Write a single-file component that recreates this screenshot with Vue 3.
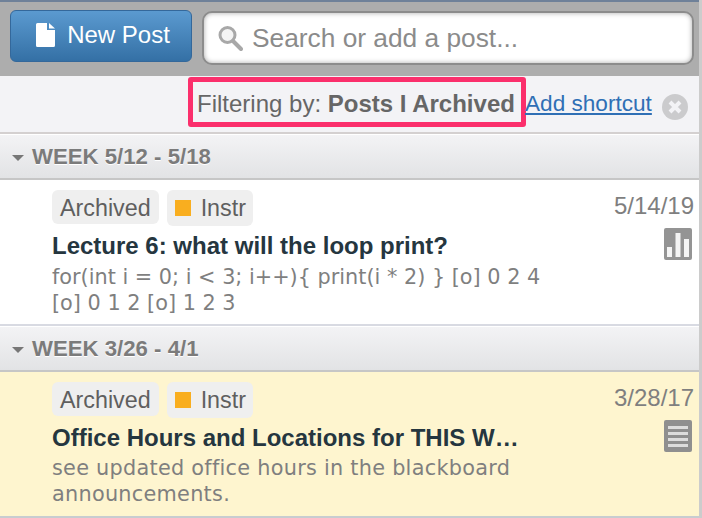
<template>
  <div class="feed">
    <!-- top toolbar -->
    <header class="toolbar">
      <button class="new-post">
        <svg class="doc-icon" width="19" height="24" viewBox="0 0 19 24">
          <path d="M0 1.5 Q0 0 1.5 0 H11 V7 H19 V22.5 Q19 24 17.5 24 H1.5 Q0 24 0 22.5 Z" fill="#fff" />
          <path d="M13 0 L19 5.5 H13 Z" fill="#fff" />
        </svg>
        New Post
      </button>
      <div class="search">
        <svg width="26" height="28" viewBox="0 0 26 28">
          <circle cx="10.5" cy="11" r="7.5" fill="#f4f4f4" stroke="#a8a8a8" stroke-width="3" />
          <path d="M16 17 L24 25" stroke="#a8a8a8" stroke-width="4" stroke-linecap="round" />
        </svg>
        <span>Search or add a post...</span>
      </div>
    </header>

    <!-- filter row -->
    <div class="filter-bar">
      <div class="filter-box">Filtering by: <b>Posts I Archived</b></div>
      <a class="shortcut">Add shortcut</a>
      <svg class="clear" width="26" height="26" viewBox="0 0 26 26">
        <circle cx="13" cy="13" r="13" fill="#cbcbcd" />
        <path d="M8 8 L18 18 M18 8 L8 18" stroke="#f3f3f6" stroke-width="4" />
      </svg>
    </div>

    <template v-for="group in groups" :key="group.week">
      <div class="week"><i class="caret"></i>{{ group.week }}</div>
      <article class="post" :class="{ unread: group.post.highlight }">
        <div class="post-main">
          <div class="tags">
            <span class="tag">Archived</span>
            <span class="tag instr"><i class="square"></i>Instr</span>
          </div>
          <h3>{{ group.post.title }}</h3>
          <p>{{ group.post.body }}</p>
        </div>
        <div class="post-side">
          <div class="date">{{ group.post.date }}</div>
          <svg v-if="group.post.kind === 'poll'" width="28" height="32" viewBox="0 0 28 32">
            <rect width="28" height="32" rx="2" fill="#949494" />
            <rect x="3" y="19" width="5" height="10" fill="#f4f4f4" />
            <rect x="11.5" y="5" width="5" height="24" fill="#f4f4f4" />
            <rect x="20" y="11" width="5" height="18" fill="#f4f4f4" />
          </svg>
          <svg v-else width="28" height="32" viewBox="0 0 28 32">
            <rect width="28" height="32" rx="2" fill="#8f8f8f" />
            <rect x="4" y="6" width="20" height="3" fill="#dcdcdc" />
            <rect x="4" y="12" width="20" height="3" fill="#dcdcdc" />
            <rect x="4" y="18" width="20" height="3" fill="#dcdcdc" />
            <rect x="4" y="24" width="20" height="3" fill="#dcdcdc" />
          </svg>
        </div>
      </article>
    </template>
  </div>
</template>

<script setup>
const groups = [
  {
    week: 'WEEK 5/12 - 5/18',
    post: {
      title: 'Lecture 6: what will the loop print?',
      body: 'for(int i = 0; i < 3; i++){ print(i * 2) } [o] 0 2 4 [o] 0 1 2 [o] 1 2 3',
      date: '5/14/19',
      kind: 'poll',
      highlight: false
    }
  },
  {
    week: 'WEEK 3/26 - 4/1',
    post: {
      title: 'Office Hours and Locations for THIS W…',
      body: 'see updated office hours in the blackboard announcements.',
      date: '3/28/17',
      kind: 'note',
      highlight: true
    }
  }
]
</script>

<style>
body {
  background: #fff;
  overflow: hidden;
}
</style>

<style scoped>
.feed {
  width: 702px;
  height: 518px;
  overflow: hidden;
  box-sizing: border-box;
  border-right: 3px solid #ccc;
  font-family: 'Liberation Sans', Arial, sans-serif;
}

.toolbar {
  height: 76px;
  box-sizing: border-box;
  margin-right: -3px;
  border-top: 2px solid #6f8199;
  background: #adadad;
  padding: 8px 8px 0 10px;
  display: flex;
  align-items: flex-start;
  gap: 10px;
}

.new-post {
  width: 182px;
  height: 52px;
  flex: none;
  display: flex;
  align-items: center;
  justify-content: center;
  gap: 12px;
  padding: 0 0 2px 4px;
  border: 1px solid #34689b;
  border-radius: 6px;
  background: linear-gradient(#5b9ad0, #3470a5);
  color: #fff;
  font: 24px 'Liberation Sans', Arial, sans-serif;
}

.search {
  flex: 1;
  height: 54px;
  margin-top: 1px;
  box-sizing: border-box;
  display: flex;
  align-items: center;
  gap: 9px;
  padding: 0 0 0 13px;
  border: 2px solid #8c8c8c;
  border-radius: 10px;
  background: #fff;
  box-shadow: inset 0 0 5px #aaa;
  color: #8b8b8b;
  font-size: 26.3px;
}

.filter-bar {
  height: 58px;
  box-sizing: border-box;
  background: #f3f3f6;
  border-bottom: 2px solid #d4d0d0;
  display: flex;
  align-items: flex-start;
  padding: 1px 0 0 188px;
  color: #666;
  font-size: 24px;
}

.filter-box {
  width: 338px;
  height: 50px;
  box-sizing: border-box;
  flex: none;
  border: 5px solid #fb2f6c;
  border-radius: 3px;
  padding: 8px 0 0 4px;
  white-space: nowrap;
}

.shortcut {
  margin: 14px 0 0 -1px;
  color: #2f6fb5;
  font-size: 22.6px;
  text-decoration: underline;
  white-space: nowrap;
}

.clear {
  margin: 17px 0 0 10px;
  flex: none;
}

.week {
  height: 45px;
  box-sizing: border-box;
  margin-top: 1px;
  background: linear-gradient(#f3f3f5, #e2e3e5);
  border-bottom: 2px solid #c6c6c6;
  padding: 1px 0 0 12px;
  display: flex;
  align-items: center;
  color: #7b7b7b;
  font-size: 22.2px;
  font-weight: bold;
  text-shadow: 0 1px 0 #fff;
}

.caret {
  width: 0;
  height: 0;
  margin: 2px 8px 0 0;
  border-left: 6px solid transparent;
  border-right: 6px solid transparent;
  border-top: 6px solid #777;
}

.post {
  height: 146px;
  box-sizing: border-box;
  display: flex;
  justify-content: space-between;
  padding: 10px 5px 0 52px;
  background: #fff;
  border-bottom: 2px solid #d8dae2;
}

.post.unread {
  background: #fef5cf;
  border-bottom-color: #c8ccd0;
}

.post-main {
  width: 540px;
  flex: none;
}

.tags {
  display: flex;
  gap: 8px;
  align-items: flex-start;
}

.tag {
  height: 34px;
  box-sizing: border-box;
  padding: 0 8px;
  border-radius: 6px;
  background: #efefef;
  color: #5f5f5f;
  font-size: 23.3px;
  line-height: 36px;
}

.tag.instr {
  height: 36px;
  display: flex;
  align-items: center;
  gap: 10px;
  padding-right: 7px;
}

.square {
  width: 16px;
  height: 16px;
  background: #f9ae1f;
}

h3 {
  margin: 5px 0 0;
  color: #25363f;
  font-size: 24px;
  line-height: 30px;
  font-weight: bold;
  white-space: nowrap;
}

p {
  margin: 3px 0 0;
  width: 500px;
  color: #7f7f7f;
  font: 20.8px/26px 'DejaVu Sans', Verdana, sans-serif;
}

.unread p {
  margin-top: 2px;
  letter-spacing: 0.27px;
}

.post-side {
  display: flex;
  flex-direction: column;
  align-items: flex-end;
  gap: 8px;
  padding-top: 2px;
}

.post-side svg {
  margin-right: 2px;
}

.date {
  color: #7f7f7f;
  font-size: 24px;
  line-height: 28px;
}
</style>
